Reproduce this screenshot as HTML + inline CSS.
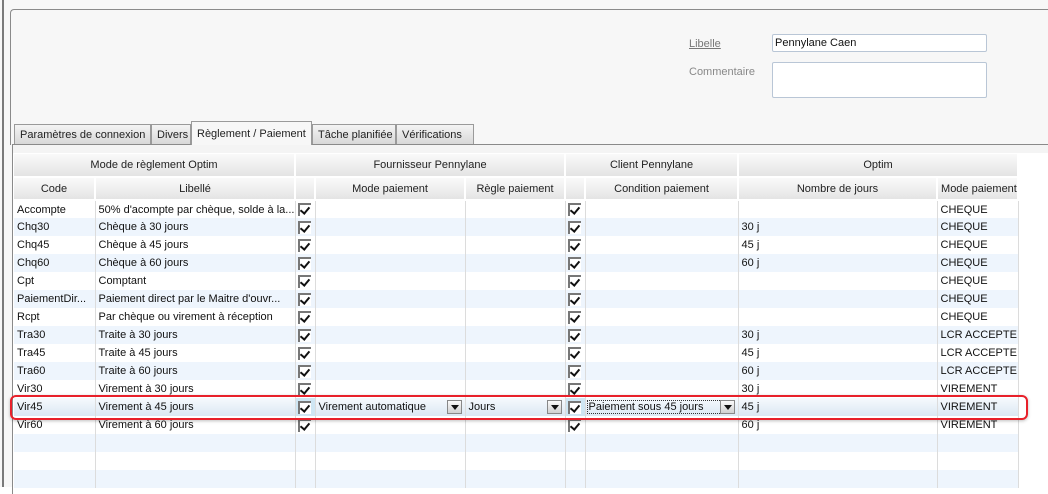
<!DOCTYPE html>
<html><head><meta charset="utf-8"><style>
*{box-sizing:border-box;margin:0;padding:0}
body{width:1048px;height:487px;overflow:hidden;background:#fff;font-family:"Liberation Sans","DejaVu Sans",sans-serif;font-size:11px;color:#111;position:relative}
.abs{position:absolute}
.tab{position:absolute;top:124px;height:20px;border:1px solid #9a9a9a;border-bottom:none;background:linear-gradient(#f4f4f4,#d8d8d8);font-size:11px;padding:4px 0 0 5px;color:#222;white-space:nowrap;overflow:hidden}
table{position:absolute;left:14px;top:154px;border-collapse:collapse;table-layout:fixed;width:1004px}
td{height:18px;padding:0 3px;border-right:1px solid #dcdcdc;white-space:nowrap;overflow:hidden;vertical-align:middle}
tr.h td{background:linear-gradient(#fafafa,#e4e4e4);text-align:center;height:23px;border-right:2px solid #fff;border-bottom:2px solid #fff;color:#222}
tr.b td{background:#eef5fd}
.cb{display:inline-block;width:13px;height:13px;border-left:2px solid #777;border-top:2px solid #777;background:#fff;position:relative;vertical-align:middle;margin-left:-1px}
.cb:after{content:"";position:absolute;left:2px;top:0px;width:4px;height:7px;border:solid #111;border-width:0 2px 2px 0;transform:rotate(40deg)}
tr.sel td{background:linear-gradient(#f6fafd,#dbe8f3)}
.dd{position:absolute;right:3px;top:2px;width:15px;height:14px;background:linear-gradient(#fafafa,#d0d0d0);border:1px solid #888}
.dd:after{content:"";position:absolute;left:3px;top:4px;border:4px solid transparent;border-top:5px solid #111}
</style></head><body>
<div class="abs" style="left:0;top:0;width:1048px;height:487px;background:#f7f7f7"></div>
<div class="abs" style="left:2px;top:0;width:2px;height:487px;background:#7a7a7a"></div>
<div class="abs" style="left:10px;top:9px;width:1040px;height:136px;border-top:1px solid #8a8a8a;border-left:1px solid #8a8a8a;border-radius:4px 0 0 0"></div>
<div class="abs" style="left:689px;top:38px;color:#777;text-decoration:underline">Libelle</div>
<div class="abs" style="left:772px;top:34px;width:215px;height:18px;background:#fff;border:1px solid #b9c6d6;border-radius:2px;padding:2px 2px">Pennylane Caen</div>
<div class="abs" style="left:689px;top:66px;color:#888">Commentaire</div>
<div class="abs" style="left:772px;top:62px;width:215px;height:36px;background:#fff;border:1px solid #b9c6d6;border-radius:2px"></div>
<div class="tab" style="left:14px;width:137px">Paramètres de connexion</div>
<div class="tab" style="left:151px;width:40px">Divers</div>
<div class="tab" style="left:191px;top:121px;height:24px;width:121px;background:#f7f7f7;z-index:2;padding-top:6px">Règlement / Paiement</div>
<div class="tab" style="left:312px;width:84px">Tâche planifiée</div>
<div class="tab" style="left:396px;width:78px">Vérifications</div>
<div class="abs" style="left:12px;top:144px;width:1040px;height:350px;border-top:1px solid #8a8a8a;border-left:1px solid #8a8a8a;background:#fff"></div>
<div class="abs" style="left:13px;top:145px;width:1040px;height:8px;background:#f4f4f4"></div>
<table>
<colgroup><col style="width:81px"><col style="width:200px"><col style="width:20px"><col style="width:150px"><col style="width:100px"><col style="width:20px"><col style="width:153px"><col style="width:199px"><col style="width:81px"></colgroup>
<tr class="h"><td colspan="2">Mode de règlement Optim</td><td colspan="3">Fournisseur Pennylane</td><td colspan="2">Client Pennylane</td><td colspan="2">Optim</td></tr>
<tr class="h"><td>Code</td><td>Libellé</td><td></td><td>Mode paiement</td><td>Règle paiement</td><td></td><td>Condition paiement</td><td>Nombre de jours</td><td>Mode paiement</td></tr>
<tr><td>Accompte</td><td>50% d'acompte par chèque, solde à la...</td><td><span class="cb"></span></td><td></td><td></td><td><span class="cb"></span></td><td></td><td></td><td>CHEQUE</td></tr>
<tr class="b"><td>Chq30</td><td>Chèque à 30 jours</td><td><span class="cb"></span></td><td></td><td></td><td><span class="cb"></span></td><td></td><td>30 j</td><td>CHEQUE</td></tr>
<tr><td>Chq45</td><td>Chèque à 45 jours</td><td><span class="cb"></span></td><td></td><td></td><td><span class="cb"></span></td><td></td><td>45 j</td><td>CHEQUE</td></tr>
<tr class="b"><td>Chq60</td><td>Chèque à 60 jours</td><td><span class="cb"></span></td><td></td><td></td><td><span class="cb"></span></td><td></td><td>60 j</td><td>CHEQUE</td></tr>
<tr><td>Cpt</td><td>Comptant</td><td><span class="cb"></span></td><td></td><td></td><td><span class="cb"></span></td><td></td><td></td><td>CHEQUE</td></tr>
<tr class="b"><td>PaiementDir...</td><td>Paiement direct par le Maitre d'ouvr...</td><td><span class="cb"></span></td><td></td><td></td><td><span class="cb"></span></td><td></td><td></td><td>CHEQUE</td></tr>
<tr><td>Rcpt</td><td>Par chèque ou virement à réception</td><td><span class="cb"></span></td><td></td><td></td><td><span class="cb"></span></td><td></td><td></td><td>CHEQUE</td></tr>
<tr class="b"><td>Tra30</td><td>Traite à 30 jours</td><td><span class="cb"></span></td><td></td><td></td><td><span class="cb"></span></td><td></td><td>30 j</td><td>LCR ACCEPTE</td></tr>
<tr><td>Tra45</td><td>Traite à 45 jours</td><td><span class="cb"></span></td><td></td><td></td><td><span class="cb"></span></td><td></td><td>45 j</td><td>LCR ACCEPTE</td></tr>
<tr class="b"><td>Tra60</td><td>Traite à 60 jours</td><td><span class="cb"></span></td><td></td><td></td><td><span class="cb"></span></td><td></td><td>60 j</td><td>LCR ACCEPTE</td></tr>
<tr><td>Vir30</td><td>Virement à 30 jours</td><td><span class="cb"></span></td><td></td><td></td><td><span class="cb"></span></td><td></td><td>30 j</td><td>VIREMENT</td></tr>
<tr class="sel"><td>Vir45</td><td>Virement à 45 jours</td><td style="background:#cfe6f3"><span class="cb"></span></td><td style="position:relative">Virement automatique<span class="dd"></span></td><td style="position:relative">Jours<span class="dd"></span></td><td style="background:#cfe6f3"><span class="cb"></span></td><td style="position:relative;padding-left:1px"><span style="border:1px dotted #333;padding:0 1px">Paiement sous 45 jours&nbsp;&nbsp;&nbsp;&nbsp;&nbsp;&nbsp;</span><span class="dd"></span></td><td>45 j</td><td>VIREMENT</td></tr>
<tr><td>Vir60</td><td>Virement à 60 jours</td><td><span class="cb"></span></td><td></td><td></td><td><span class="cb"></span></td><td></td><td>60 j</td><td>VIREMENT</td></tr>
<tr class="b"><td></td><td></td><td></td><td></td><td></td><td></td><td></td><td></td><td></td></tr>
<tr><td></td><td></td><td></td><td></td><td></td><td></td><td></td><td></td><td></td></tr>
<tr class="b"><td></td><td></td><td></td><td></td><td></td><td></td><td></td><td></td><td></td></tr>
</table>
<div class="abs" style="left:10px;top:395px;width:1018px;height:25px;border:2px solid #e8202a;border-radius:6px;box-shadow:0 1px 3px rgba(0,0,0,.25)"></div>
</body></html>
